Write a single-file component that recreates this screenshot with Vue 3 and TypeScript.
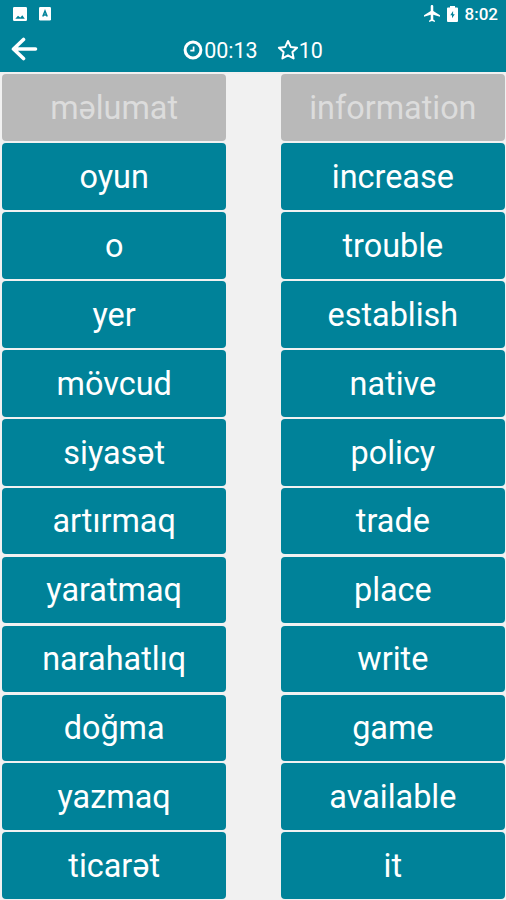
<script setup lang="ts">
interface Word {
  text: string
  matched?: boolean
}

const columns: Word[][] = [
  [
    { text: 'məlumat', matched: true },
    { text: 'oyun' },
    { text: 'o' },
    { text: 'yer' },
    { text: 'mövcud' },
    { text: 'siyasət' },
    { text: 'artırmaq' },
    { text: 'yaratmaq' },
    { text: 'narahatlıq' },
    { text: 'doğma' },
    { text: 'yazmaq' },
    { text: 'ticarət' },
  ],
  [
    { text: 'information', matched: true },
    { text: 'increase' },
    { text: 'trouble' },
    { text: 'establish' },
    { text: 'native' },
    { text: 'policy' },
    { text: 'trade' },
    { text: 'place' },
    { text: 'write' },
    { text: 'game' },
    { text: 'available' },
    { text: 'it' },
  ],
]
const time = '00:13'
const score = 10
</script>

<template>
  <div class="screen">
    <header class="top">
      <div class="status">
        <svg class="s-image" viewBox="0 0 14 14">
          <path fill="#fff" fill-rule="evenodd" d="M1.300 0h11.400A1.300 1.300 0 0 1 14 1.300v11.400a1.300 1.300 0 0 1-1.300 1.300H1.300A1.300 1.300 0 0 1 0 12.700V1.300A1.300 1.300 0 0 1 1.300 0zM2.300 11.700h9.500L9.300 8.200 7.300 10.500 5 8.800z" />
        </svg>
        <svg class="s-app" viewBox="0 0 12 14">
          <rect width="12" height="13.500" rx="1.200" fill="#fff" />
          <path d="M3.800 9.500 6 4l2.200 5.500M4.500 8h3" fill="none" stroke="#008299" stroke-width="1.500" />
        </svg>
        <span class="grow"></span>
        <svg class="s-plane" viewBox="2 2 19 20">
          <path fill="#fff" d="M21 16v-2l-8-5V3.500C13 2.670 12.330 2 11.500 2S10 2.670 10 3.500V9l-8 5v2l8-2.500V19l-2 1.500V22l3.500-1 3.500 1v-1.500L13 19v-5.500z" />
        </svg>
        <svg class="s-battery" viewBox="0 0 11 16">
          <path fill="#fff" fill-rule="evenodd" d="M10 1.500H8V0H3v1.500H1a1 1 0 0 0-1 1V15a1 1 0 0 0 1 1h9a1 1 0 0 0 1-1V2.500a1 1 0 0 0-1-1zM5 12.300V9.300H3.300L6.100 5v3.200h1.700z" />
        </svg>
        <span class="clock">8:02</span>
      </div>
      <div class="bar">
        <svg class="back" viewBox="0 0 27 24">
          <path d="M12.500 2.500 2.500 12l10 9.500M3 12h21.500" fill="none" stroke="#fff" stroke-width="3.600" stroke-linecap="round" stroke-linejoin="round" />
        </svg>
        <div class="stats">
          <svg class="timer" viewBox="0 0 20 20">
            <circle cx="10" cy="10" r="7.900" fill="none" stroke="#fff" stroke-width="3" />
            <path d="M10.600 6.500v4.200H7.300" fill="none" stroke="#fff" stroke-width="1.700" />
          </svg>
          <span class="value time">{{ time }}</span>
          <svg class="star" viewBox="0 0 22 21">
            <path d="m11 2 2.700 5.900 6.400.8-4.700 4.400 1.200 6.300-5.600-3.100-5.600 3.100 1.200-6.300L1.900 8.700l6.400-.8z" fill="none" stroke="#fff" stroke-width="2" stroke-linejoin="round" />
          </svg>
          <span class="value">{{ score }}</span>
        </div>
      </div>
    </header>
    <main class="board">
      <div v-for="(words, c) in columns" :key="c" class="column">
        <button v-for="word in words" :key="word.text" class="word" :class="{ matched: word.matched }">
          {{ word.text }}
        </button>
      </div>
    </main>
  </div>
</template>

<style>
body {
  margin: 0;
}
</style>

<style scoped>
.screen {
  display: flex;
  flex-direction: column;
  width: 506px;
  height: 900px;
  overflow: hidden;
  background: #f1f1f1;
  font-family: Roboto, "Noto Sans", sans-serif;
  color: #fff;
}
.top {
  height: 72.400px;
  flex: none;
  background: #008299;
}
.status {
  display: flex;
  align-items: center;
  height: 27px;
  padding: 0 8px 0 13px;
}
.s-image {
  width: 14px;
  height: 14px;
}
.s-app {
  width: 12px;
  height: 14px;
  margin-left: 12px;
}
.grow {
  flex: 1;
}
.s-plane {
  width: 16px;
  height: 17px;
}
.s-battery {
  width: 11px;
  height: 16px;
  margin: 0 7px;
}
.clock {
  font-size: 17px;
  font-weight: 500;
}
.bar {
  display: grid;
  grid-template-columns: 39px 1fr 39px;
  align-items: center;
  height: 46px;
}
.back {
  width: 27px;
  height: 24px;
  margin: -2px 0 0 11px;
}
.stats {
  display: flex;
  align-items: center;
  justify-content: center;
  font-size: 21.500px;
  line-height: 26px;
}
.value {
  padding-top: 2px;
}
.timer {
  width: 20px;
  height: 20px;
  margin-right: 1px;
}
.time {
  margin-right: 19px;
}
.star {
  width: 22px;
  height: 21px;
  margin-bottom: 1px;
}
.board {
  display: flex;
  flex: 1;
  justify-content: space-between;
  min-height: 0;
  padding: 2px 1px 1px 2px;
}
.column {
  display: flex;
  flex-direction: column;
  gap: 2.300px;
  width: 224.300px;
}
.word {
  flex: 1 1 0;
  box-sizing: border-box;
  min-height: 0;
  padding: 0.600px 0 0;
  border: 0;
  border-radius: 4px;
  background: #008299;
  color: #fff;
  font: 400 32.400px/38px Roboto, "Noto Sans", sans-serif;
}
.matched {
  background: #b9b9b9;
  color: #dcdcdc;
}
</style>
